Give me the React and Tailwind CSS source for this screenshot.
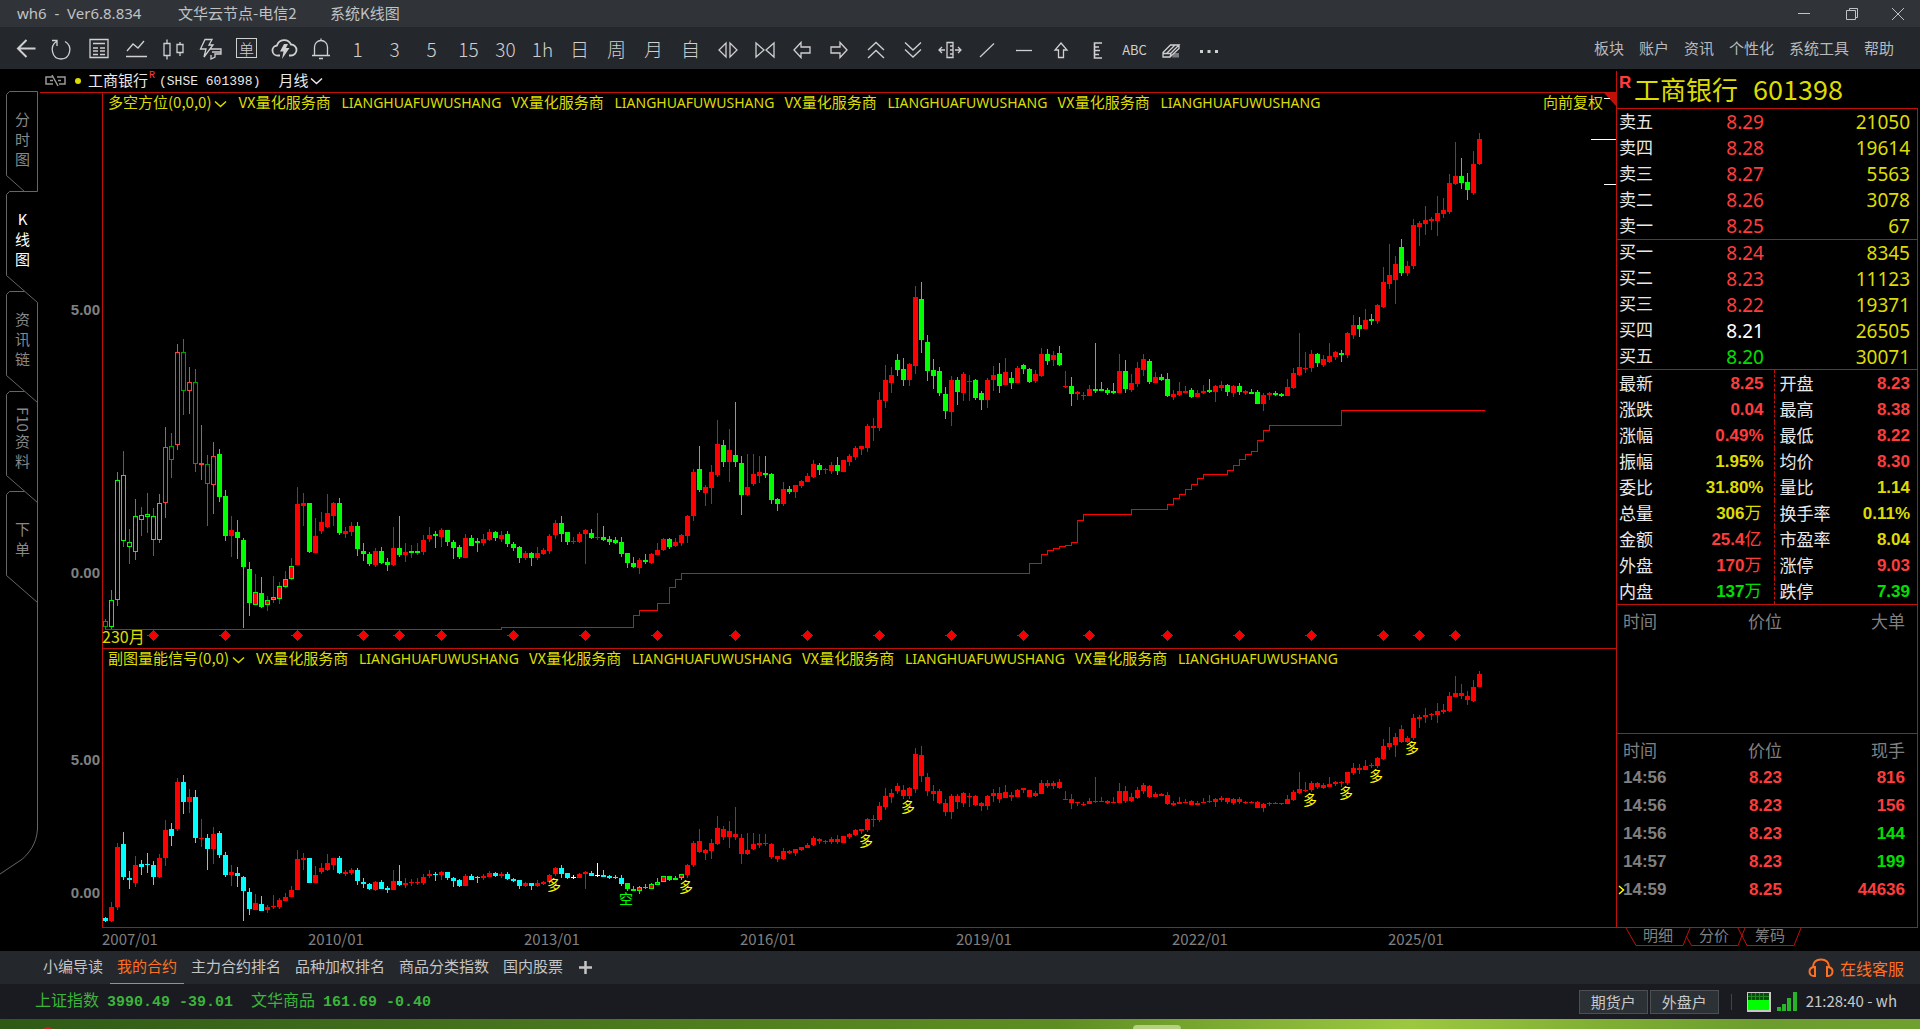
import React, { useState } from "react";
import clsx from "clsx";

// Monthly bars: [high, bodyTop, bodyBottom, low, kind]
// kinds: R/G solid, B red with green frame, M green body on red wick,
// h/g bright hollow, s red hollow, d dark green hollow
const BARS = [
	[619, 621, 627, 629, "d"], [590, 600, 627, 629, "h"], [472, 480, 600, 606, "h"], [451, 475, 541, 547, "g"],
	[529, 542, 547, 564, "g"], [499, 516, 552, 560, "h"], [507, 515, 520, 536, "g"], [493, 514, 517, 533, "g"],
	[508, 516, 540, 556, "g"], [494, 503, 540, 543, "h"], [427, 447, 503, 518, "s"], [433, 446, 460, 478, "d"],
	[344, 352, 445, 450, "s"], [339, 352, 391, 415, "d"], [367, 382, 391, 414, "s"], [369, 382, 464, 472, "d"],
	[425, 463, 465, 480, "s"], [455, 464, 484, 526, "d"], [442, 456, 485, 514, "s"], [449, 454, 497, 502, "G"],
	[490, 496, 536, 541, "G"], [516, 530, 536, 557, "R"], [520, 532, 538, 559, "G"], [538, 540, 567, 628, "G"],
	[562, 569, 603, 616, "G"], [574, 592, 605, 605, "B"], [577, 593, 607, 608, "G"], [596, 600, 605, 611, "B"],
	[576, 597, 600, 603, "B"], [582, 586, 599, 604, "B"], [571, 579, 587, 588, "B"], [558, 566, 579, 580, "B"],
	[487, 504, 565, 565, "R"], [493, 503, 506, 526, "R"], [503, 503, 552, 553, "G"], [518, 536, 553, 553, "R"],
	[512, 522, 531, 534, "R"], [494, 513, 527, 528, "R"], [502, 503, 516, 526, "R"], [498, 503, 533, 535, "G"],
	[527, 531, 534, 538, "R"], [522, 526, 532, 536, "R"], [522, 526, 549, 556, "G"], [543, 551, 554, 561, "G"],
	[552, 554, 564, 566, "G"], [548, 551, 565, 567, "R"], [547, 551, 563, 564, "G"], [558, 562, 565, 571, "G"],
	[527, 548, 565, 566, "R"], [516, 548, 555, 557, "G"], [543, 552, 555, 562, "R"], [545, 551, 553, 558, "M"],
	[543, 551, 553, 555, "M"], [535, 540, 552, 555, "R"], [527, 535, 539, 542, "R"], [531, 534, 536, 548, "G"],
	[528, 530, 537, 547, "R"], [530, 530, 542, 546, "G"], [540, 542, 548, 559, "G"], [545, 547, 557, 559, "G"],
	[534, 538, 558, 558, "R"], [535, 538, 546, 546, "G"], [538, 541, 543, 552, "G"], [534, 539, 543, 546, "R"],
	[529, 532, 540, 541, "R"], [531, 532, 538, 541, "G"], [531, 535, 539, 542, "R"], [531, 534, 544, 547, "G"],
	[542, 544, 548, 551, "G"], [546, 547, 558, 563, "G"], [551, 553, 558, 560, "R"], [552, 553, 558, 566, "G"],
	[547, 553, 558, 560, "R"], [548, 550, 554, 555, "R"], [534, 536, 551, 554, "R"], [520, 523, 535, 539, "R"],
	[516, 523, 534, 542, "G"], [532, 532, 542, 545, "G"], [537, 541, 542, 544, "R"], [532, 534, 542, 543, "R"],
	[529, 530, 534, 564, "R"], [529, 533, 538, 539, "G"], [513, 537, 538, 540, "R"], [526, 537, 540, 541, "G"],
	[536, 539, 542, 545, "G"], [537, 540, 543, 544, "G"], [537, 542, 554, 557, "G"], [553, 553, 563, 568, "G"],
	[557, 563, 567, 568, "G"], [558, 560, 568, 574, "R"], [554, 560, 562, 564, "G"], [553, 554, 563, 564, "R"],
	[543, 550, 555, 555, "R"], [538, 539, 550, 551, "R"], [538, 539, 547, 549, "G"], [538, 542, 546, 547, "R"],
	[534, 535, 543, 546, "R"], [515, 516, 536, 543, "R"], [469, 472, 516, 521, "R"], [446, 469, 490, 492, "G"],
	[485, 487, 493, 506, "R"], [465, 472, 488, 504, "R"], [420, 444, 475, 477, "R"], [440, 445, 462, 467, "G"],
	[429, 450, 462, 482, "R"], [402, 455, 462, 467, "G"], [456, 463, 495, 515, "G"], [454, 487, 495, 496, "R"],
	[454, 474, 484, 486, "R"], [456, 472, 476, 483, "R"], [456, 473, 475, 478, "G"], [473, 474, 500, 504, "G"],
	[498, 499, 504, 511, "G"], [482, 489, 504, 506, "R"], [486, 489, 492, 494, "G"], [485, 485, 492, 498, "R"],
	[480, 481, 486, 488, "R"], [473, 476, 482, 482, "R"], [460, 464, 477, 478, "R"], [463, 465, 470, 475, "G"],
	[468, 469, 470, 474, "R"], [462, 465, 471, 474, "R"], [457, 465, 471, 475, "G"], [460, 460, 472, 472, "R"],
	[454, 456, 462, 466, "R"], [446, 448, 457, 460, "R"], [446, 446, 449, 455, "R"], [424, 426, 448, 452, "R"],
	[418, 426, 428, 441, "R"], [392, 400, 428, 431, "R"], [365, 380, 401, 408, "R"], [367, 375, 383, 393, "R"],
	[354, 360, 370, 376, "G"], [358, 369, 380, 386, "G"], [363, 364, 380, 386, "R"], [286, 297, 366, 374, "R"],
	[282, 299, 340, 353, "G"], [335, 342, 371, 381, "G"], [359, 370, 376, 389, "G"], [367, 371, 393, 396, "G"],
	[387, 394, 411, 419, "G"], [376, 380, 412, 426, "R"], [377, 380, 392, 405, "G"], [372, 374, 393, 401, "R"],
	[375, 381, 382, 401, "R"], [379, 380, 398, 400, "G"], [391, 393, 400, 410, "G"], [378, 380, 400, 408, "R"],
	[366, 375, 380, 391, "R"], [363, 374, 386, 393, "G"], [358, 372, 385, 385, "R"], [372, 378, 383, 389, "G"],
	[366, 368, 383, 383, "R"], [364, 365, 369, 374, "G"], [368, 369, 382, 383, "G"], [370, 374, 381, 383, "R"],
	[348, 354, 376, 377, "R"], [349, 354, 361, 365, "G"], [351, 355, 360, 366, "R"], [346, 353, 365, 366, "G"],
	[371, 386, 387, 388, "R"], [377, 386, 394, 406, "G"], [391, 392, 394, 400, "R"], [392, 395, 396, 400, "R"],
	[385, 389, 396, 396, "R"], [343, 389, 391, 393, "G"], [382, 389, 391, 391, "G"], [388, 390, 393, 395, "G"],
	[383, 391, 393, 394, "G"], [354, 371, 393, 393, "R"], [360, 371, 389, 393, "G"], [374, 383, 390, 392, "R"],
	[362, 368, 384, 387, "R"], [354, 359, 370, 376, "R"], [359, 361, 382, 384, "G"], [372, 377, 383, 383, "R"],
	[374, 377, 380, 381, "G"], [373, 379, 396, 397, "G"], [390, 394, 397, 400, "R"], [382, 391, 395, 396, "R"],
	[386, 391, 393, 393, "R"], [388, 390, 397, 398, "G"], [390, 393, 397, 397, "R"], [385, 391, 393, 394, "R"],
	[379, 390, 392, 393, "G"], [385, 386, 392, 402, "R"], [381, 385, 388, 391, "R"], [384, 385, 392, 396, "G"],
	[385, 386, 393, 397, "R"], [383, 386, 392, 395, "G"], [390, 391, 393, 395, "R"], [389, 392, 394, 394, "G"],
	[390, 392, 404, 404, "G"], [393, 395, 404, 411, "R"], [392, 393, 395, 400, "R"], [391, 393, 395, 396, "G"],
	[393, 394, 396, 397, "G"], [379, 387, 396, 396, "R"], [368, 373, 388, 389, "R"], [333, 367, 375, 376, "R"],
	[352, 368, 369, 373, "R"], [350, 354, 368, 372, "R"], [353, 354, 363, 367, "G"], [355, 359, 365, 367, "R"],
	[343, 356, 362, 363, "R"], [351, 352, 357, 360, "R"], [350, 353, 355, 362, "G"], [332, 333, 355, 358, "R"],
	[315, 325, 335, 339, "R"], [317, 325, 329, 337, "G"], [309, 320, 329, 329, "R"], [314, 319, 321, 325, "G"],
	[304, 305, 321, 324, "R"], [267, 282, 307, 308, "R"], [244, 275, 284, 289, "R"], [256, 264, 280, 304, "R"],
	[239, 247, 273, 276, "G"], [261, 266, 273, 276, "R"], [219, 225, 266, 269, "R"], [221, 223, 227, 246, "R"],
	[206, 220, 224, 235, "R"], [217, 219, 221, 230, "R"], [196, 213, 221, 236, "R"], [198, 210, 214, 218, "R"],
	[174, 183, 212, 214, "R"], [142, 176, 184, 185, "R"], [158, 176, 183, 189, "G"], [173, 182, 190, 200, "G"],
	[151, 164, 193, 195, "R"], [133, 139, 164, 165, "R"]
];

// kind -> [wick, body fill, body frame]
const PAINT = {
	R: ["#ff0000", "#ff0000", null],
	G: ["#00ff00", "#00ff00", null],
	B: ["#ff0000", "#ff0000", "#00ff00"],
	M: ["#ff0000", "#00ff00", null],
	h: ["#ff3c3c", "#000", "#00ff00"],
	g: ["#00a000", "#000", "#00ff00"],
	s: ["#ff3c3c", "#000", "#ff3c3c"],
	d: ["#00a000", "#000", "#00a000"],
	C: ["#00ffff", "#00ffff", null],
	W: ["#ffffff", "#ffffff", null],
	F: ["#00ff00", "#ff0000", "#00ff00"]
};

const STEPS = [
	[105, 629], [501, 627], [633, 615], [639, 610], [657, 603], [669, 587], [675, 579], [681, 573], [1029, 563],
	[1041, 554], [1047, 550], [1053, 548], [1059, 546], [1065, 545], [1071, 542], [1077, 520], [1083, 514],
	[1131, 509], [1167, 504], [1173, 498], [1179, 494], [1185, 489], [1191, 484], [1197, 478], [1203, 474],
	[1227, 470], [1233, 465], [1239, 459], [1245, 454], [1251, 451], [1257, 440], [1263, 430], [1269, 425], [1341, 410]
];

const DIAMONDS = [153, 225, 297, 363, 399, 441, 513, 585, 657, 735, 807, 879, 951, 1023, 1089, 1167, 1239, 1311, 1383, 1419, 1455];

const SIGNALS = [
	[554, 885, "多"], [626, 899, "空"], [686, 887, "多"], [866, 841, "多"], [908, 807, "多"],
	[1310, 800, "多"], [1346, 793, "多"], [1376, 776, "多"], [1412, 748, "多"]
];

const ASKS = [["卖五", "8.29", "21050"], ["卖四", "8.28", "19614"], ["卖三", "8.27", "5563"], ["卖二", "8.26", "3078"], ["卖一", "8.25", "67"]];
const BIDS = [["买一", "8.24", "8345"], ["买二", "8.23", "11123"], ["买三", "8.22", "19371"], ["买四", "8.21", "26505"], ["买五", "8.20", "30071"]];

const RED = "text-[#ff3c3c]";
const GREEN = "text-[#00e000]";
const YELLOW = "text-[#dcdc00]";

const STATS = [
	["最新", "8.25", "", RED, "开盘", "8.23", RED],
	["涨跌", "0.04", "", RED, "最高", "8.38", RED],
	["涨幅", "0.49%", "", RED, "最低", "8.22", RED],
	["振幅", "1.95%", "", YELLOW, "均价", "8.30", RED],
	["委比", "31.80%", "", YELLOW, "量比", "1.14", YELLOW],
	["总量", "306", "万", YELLOW, "换手率", "0.11%", YELLOW],
	["金额", "25.4", "亿", RED, "市盈率", "8.04", YELLOW],
	["外盘", "170", "万", RED, "涨停", "9.03", RED],
	["内盘", "137", "万", GREEN, "跌停", "7.39", GREEN]
];

const TRADES = [
	["14:56", "8.23", "816", RED],
	["14:56", "8.23", "156", RED],
	["14:56", "8.23", "144", GREEN],
	["14:57", "8.23", "199", GREEN],
	["14:59", "8.25", "44636", RED]
];

const barX = (i) => 105 + i * 6;
const subY = (y) => Math.round(603.67 + y * 0.506);

function subKind(kind, i) {
	const up = "RBMhs".includes(kind);
	if (i === 78 || i === 82) return "W";
	if (i >= 97) return "R";
	if (i >= 87) return up && i !== 95 ? "F" : "G";
	return up ? "R" : "C";
}

function Bar({ x, bar, kind }) {
	const [hi, top, bottom, lo] = bar;
	const [wick, fill, frame] = PAINT[kind];
	const h = Math.max(bottom - top, 1);
	return (
		<g>
			<rect x={x} y={hi} width={1} height={Math.max(lo - hi, 1)} fill={wick} />
			<rect x={x - 2} y={top} width={5} height={h} fill={frame || fill} />
			{frame && h > 2 && <rect x={x - 1} y={top + 1} width={3} height={h - 2} fill={fill} />}
		</g>
	);
}

function AxisLabel({ y, children }) {
	return (
		<text x={100} y={y} textAnchor="end" className="fill-[#808080] font-['Liberation_Sans'] text-[15px] font-bold">
			{children}
		</text>
	);
}

function stepPath() {
	let d = `M${STEPS[0][0]} ${STEPS[0][1] + 0.5}`;
	STEPS.slice(1).forEach(([x, y]) => {
		d += `H${x + 0.5}V${y + 0.5}`;
	});
	return `${d}H1485`;
}

function Chevron({ className }) {
	return (
		<svg width="13" height="8" viewBox="0 0 13 8" fill="none" stroke="currentColor" strokeWidth="1.5" className={className}>
			<path d="M1 1.5l5.500 5L12 1.500" />
		</svg>
	);
}

function IndicatorTitle({ name }) {
	return (
		<div className="absolute left-[68px] top-0 flex h-[18px] items-center whitespace-nowrap text-[15px] text-[#dcdc00]">
			<button type="button" className="flex items-center gap-[3px]">
				{name}
				<Chevron className="mt-1" />
			</button>
			<div className="ml-[11px] flex">
				{[0, 1, 2, 3].map((n) => (
					<span key={n} className="flex w-[273px] items-baseline">
						<span className="w-[103px]">VX量化服务商</span>
						<span className="font-['Noto_Sans'] text-[14px] leading-none">LIANGHUAFUWUSHANG</span>
					</span>
				))}
			</div>
		</div>
	);
}

function Glyph({ children, w = 28 }) {
	return (
		<svg width={w} height="28" viewBox={`0 0 ${w} 28`} fill="none" stroke="currentColor" strokeWidth="1.300">
			{children}
		</svg>
	);
}

const TOOLS = [
	["后退", <Glyph><path strokeWidth="2" d="M24.500 14.500H7M15.500 6 7 14.500l8.500 8.500" /></Glyph>],
	["刷新", <Glyph><path d="M4 6.500h5V12M8.500 7.500C1.500 12 3.500 25 13 25s12-13 4-17.500" /></Glyph>],
	["报价", <Glyph><path d="M5 5.500h18v18H5zM8 9.500h12M8 14h5m2 0h5M8 17h5m2 0h5M8 20.500h5m2 0h5" /></Glyph>],
	["分时", <Glyph><path d="M5 17l6-7 5 4 6-7M4 22.500h21" /></Glyph>],
	["K线", <Glyph><path d="M5 9.500h6v12H5zM8 5.500v4m0 12v4M18 10.500h6v8h-6zM21 8v2.500m0 8V22" /></Glyph>],
	["闪电下单", <Glyph><path d="M9 5.500h7L13 11h4L8 23l2-8H4.500zM14 15h11v5h-6v3l-4 2v-4M16 18h9" /></Glyph>],
	["下单", (
		<span className="flex h-5 w-[21px] items-center justify-center border border-current text-[15px] leading-none">单</span>
	)],
	["云", (
		<Glyph>
			<path strokeWidth="1.800" d="M10 21.500H8a5 5 0 0 1-1-10 7.500 7.500 0 0 1 14-1 5.500 5.500 0 0 1 0 11h-2" />
			<path fill="currentColor" stroke="none" d="M14 10h4l-2 4h3.500L12 25l1.500-7.500H10z" />
		</Glyph>
	)],
	["预警", <Glyph><path d="M5 21.500h18M7.500 21V13a6.500 6.500 0 0 1 13 0v8M14 4.500v2M12 24.500h4" /></Glyph>],
	["1分钟", "1"], ["3分钟", "3"], ["5分钟", "5"], ["15分钟", "15"], ["30分钟", "30"], ["1小时", "1h"],
	["日线", "日"], ["周线", "周"], ["月线", "月"], ["自定义", "自"],
	["放大", <Glyph><path d="M12 9v14l-7-7zM16 9v14l7-7z" /></Glyph>],
	["缩小", <Glyph><path d="M5 9v14l8-7zM23 9v14l-8-7z" /></Glyph>],
	["左移", <Glyph><path d="M6 16 13 8.500v4.500h9v6h-9v4.500z" /></Glyph>],
	["右移", <Glyph><path d="M22 16 15 8.500v4.500H6v6h9v4.500z" /></Glyph>],
	["上翻", <Glyph><path d="M6 16l8-7.500 8 7.500M6 24l8-7.500 8 7.500" /></Glyph>],
	["下翻", <Glyph><path d="M6 8.500l8 7.500 8-7.500M6 15.500l8 7.500 8-7.500" /></Glyph>],
	["间距", <Glyph><path d="M11 8.500h6v15h-6zM14 12h3m-3 4h3m-3 4h3M9 16H3m3-3-3 3 3 3M19 16h6m-3-3 3 3-3 3" /></Glyph>],
	["画线", <Glyph><path strokeWidth="1.200" d="M7 23 21 9.500" /></Glyph>],
	["水平线", <Glyph><path d="M6 16.500h16" /></Glyph>],
	["箭头", <Glyph><path d="M14 9l6 7h-3.500v7.500h-5V16H8z" /></Glyph>],
	["刻度", <Glyph><path strokeWidth="1.600" d="M18 9h-7.500v15H18M11 13h4M11 16.500h5M11 20.500h4" /></Glyph>],
	["文字", <span className="pt-1 text-[13px] font-normal">ABC</span>],
	["擦除", (
		<Glyph>
			<path d="M5 18.500 12.500 11H21l-8.500 8.500H5zM5 18.500V23h7l1-3.500M12 23l9-8.500V11M9 19l8-8" />
			<path fill="currentColor" stroke="none" opacity=".5" d="M16 19h5v4.500h-7z" />
		</Glyph>
	)],
	["更多", <Glyph><path fill="currentColor" stroke="none" d="M5 16h3v3H5zM12.500 16h3v3h-3zM20 16h3v3h-3z" /></Glyph>]
];

function TitleBar() {
	return (
		<header className="flex h-[27px] items-center bg-[#303338] pl-[17px] text-[15px] text-[#c0c2c4]">
			<span className="w-[161px] whitespace-pre font-['Noto_Sans']">wh6  -  Ver6.8.834</span>
			<span className="w-[152px]">文华云节点-电信2</span>
			<span>系统K线图</span>
			<div className="ml-auto flex">
				<button type="button" aria-label="最小化" className="flex h-[27px] w-12 items-center justify-center">
					<svg width="14" height="14" stroke="currentColor"><path d="M1 6.500h12" /></svg>
				</button>
				<button type="button" aria-label="还原" className="flex h-[27px] w-12 items-center justify-center">
					<svg width="14" height="14" fill="none" stroke="currentColor"><path d="M1.500 3.500h9v9h-9zM4.500 3V1.500h8v9H11" /></svg>
				</button>
				<button type="button" aria-label="关闭" className="flex h-[27px] w-11 items-center justify-center">
					<svg width="14" height="14" stroke="currentColor"><path d="M1 1l12 12M13 1 1 13" /></svg>
				</button>
			</div>
		</header>
	);
}

function Toolbar() {
	return (
		<nav className="flex h-[42px] items-center bg-[#24272c] pl-[6px] pr-[26px] text-[#d0d0d0]">
			{TOOLS.map(([label, icon]) => (
				<button
					key={label}
					type="button"
					title={label}
					className="flex h-9 w-[37px] shrink-0 items-center justify-center text-[19px] font-light"
				>
					{typeof icon === "string" ? <span className="pt-[2px]">{icon}</span> : icon}
				</button>
			))}
			<div className="ml-auto flex gap-[15px] whitespace-nowrap text-[15px] text-[#b8babc]">
				{["板块", "账户", "资讯", "个性化", "系统工具", "帮助"].map((m) => (
					<button key={m} type="button">{m}</button>
				))}
			</div>
		</nav>
	);
}

function SideTabs({ active, onSelect }) {
	const tabs = [["分", "时", "图"], ["K", "线", "图"], ["资", "讯", "链"], ["F10", "资", "料"], ["下", "单"]];
	return (
		<div className="relative w-10 shrink-0">
			<svg className="absolute inset-0 h-full w-full" fill="none" stroke="#666">
				<path d="M24.500 122.500 6.500 106.500V25.500l3-3h28v100" />
				<path d="M37.500 122.500h-28l-3 3v81l31 27" />
				<path d="M24.500 222.500h-15l-3 3v81l31 27" />
				<path d="M24.500 322.500h-15l-3 3v81l31 27" />
				<path d="M24.500 422.500h-15l-3 3v81l31 27" />
				<path d="M37.500 233.500V760c-1 16-9 24-15 30L0 805" />
			</svg>
			<div className="relative flex flex-col pl-[7px] pt-5">
				{tabs.map((chars) => (
					<button
						key={chars.join("")}
						type="button"
						onClick={() => onSelect(chars.join(""))}
						className={clsx(
							"flex h-[100px] w-[31px] flex-col items-center justify-center text-[15px] leading-5",
							chars.join("") === active ? "text-white" : "text-[#888]"
						)}
					>
						{chars.map((c) => (
							<span key={c} className={c === "F10" ? "[writing-mode:vertical-rl]" : ""}>{c}</span>
						))}
					</button>
				))}
			</div>
		</div>
	);
}

function MainChart() {
	return (
		<div className="relative h-[556px] border-t border-[#c01008]">
			<svg className="block h-full w-full" shapeRendering="crispEdges">
				<g transform="translate(-40 -93)">
					<AxisLabel y={315}>5.00</AxisLabel>
					<AxisLabel y={578}>0.00</AxisLabel>
					<rect x={102} y={93} width={1} height={556} fill="#c01008" />
					<path d={stepPath()} fill="none" stroke="#ff0000" />
					{BARS.map((b, i) => (
						<Bar key={i} x={barX(i)} bar={b} kind={b[4]} />
					))}
					{DIAMONDS.map((x) => (
						<path key={x} d={`M${x + 0.5} 630l6 5.500-6 5.500-6-5.500z`} fill="#f00000" />
					))}
					<text x={102} y={643} className="fill-[#dcdc00] text-[16px]">230月</text>
				</g>
			</svg>
			<IndicatorTitle name="多空方位(0,0,0)" />
			<button type="button" className="absolute right-[13px] top-0 h-[18px] text-[15px] leading-[18px] text-[#dcdc00]">
				向前复权
			</button>
			<svg width="25" height="100" className="absolute right-0 top-0">
				<path d="M13 0h12v13z" fill="#c01008" />
				<path d="M13 5.500h6M0 46.500h25M13 91.500h12" stroke="#fff" />
			</svg>
		</div>
	);
}

function SubChart() {
	return (
		<div className="relative h-[280px] border-y border-[#c01008]">
			<svg className="block h-full w-full" shapeRendering="crispEdges">
				<g transform="translate(-40 -649)">
					<AxisLabel y={765}>5.00</AxisLabel>
					<AxisLabel y={898}>0.00</AxisLabel>
					<rect x={102} y={649} width={1} height={278} fill="#c01008" />
					{BARS.map((b, i) => (
						<Bar key={i} x={barX(i)} bar={b.slice(0, 4).map(subY)} kind={subKind(b[4], i)} />
					))}
					{SIGNALS.map(([x, y, t]) => (
						<text key={x} x={x} y={y + 5} textAnchor="middle" className={clsx("text-[14px]", t === "多" ? "fill-[#ffff00]" : "fill-[#00ff00]")}>
							{t}
						</text>
					))}
				</g>
			</svg>
			{/* the frame lines only run along the plot, not along the axis gutter */}
			<span className="absolute -top-px left-0 h-px w-[62px] bg-black" />
			<span className="absolute -bottom-px left-0 h-px w-[62px] bg-black" />
			<IndicatorTitle name="副图量能信号(0,0)" />
		</div>
	);
}

function Charts() {
	return (
		<section className="min-w-0 flex-1 overflow-hidden">
			<div className="flex h-[23px] items-center pl-[5px] text-[15px] text-[#e8e8e8]">
				<svg width="21" height="13" fill="none" stroke="#999" strokeWidth="1.500">
					<path d="M8 3H1v7h7M5 6.500h3M7 1l6 11M12 3h8v7h-6M13 6.500h3" />
				</svg>
				<span className="ml-[9px] h-[6px] w-[6px] rounded-full bg-[#dcdc00]" />
				<span className="ml-[7px]">工商银行</span>
				<sup className="w-[11px] pl-px font-['Liberation_Mono'] text-[10px] text-[#ff3c3c]">R</sup>
				<span className="pt-[2px] font-['Liberation_Mono'] text-[13px]">(SHSE 601398)</span>
				<button type="button" className="ml-[18px] flex items-center gap-[2px]">
					月线
					<Chevron />
				</button>
			</div>
			<MainChart />
			<SubChart />
			<div className="flex h-[23px] items-center pl-[62px] text-[15px] text-[#808080]">
				<span className="w-[206px]">2007/01</span>
				{["2010/01", "2013/01", "2016/01", "2019/01", "2022/01", "2025/01"].map((d) => (
					<span key={d} className="w-[216px]">{d}</span>
				))}
			</div>
		</section>
	);
}

function priceColor(p) {
	if (p === "8.21") return "text-white";
	return p === "8.20" ? GREEN : RED;
}

function Depth({ rows }) {
	return (
		<table className="w-full table-fixed border-t border-[#c01008] font-['Noto_Sans','Noto_Sans_CJK_SC',sans-serif] text-[19px] leading-6">
			<tbody>
				{rows.map(([label, price, vol]) => (
					<tr key={label} className="h-[26px]">
						<th className="w-[60px] p-0 pl-[2px] text-left text-[17px] font-normal text-[#e8e8e8]">{label}</th>
						<td className={clsx("w-[87px] p-0 pt-px text-right", priceColor(price))}>{price}</td>
						<td className="p-0 pr-[7px] pt-px text-right text-[#dcdc00]">{vol}</td>
					</tr>
				))}
			</tbody>
		</table>
	);
}

function Stats() {
	const num = "pt-[2px] text-right font-['Liberation_Sans'] font-bold";
	return (
		<table className="w-full table-fixed border-t border-[#c01008] text-[17px] leading-6 text-[#e8e8e8]">
			<tbody>
				{STATS.map(([l1, v1, unit, c1, l2, v2, c2]) => (
					<tr key={l1} className="h-[26px]">
						<th className="w-[60px] p-0 pl-[2px] text-left font-normal">{l1}</th>
						<td className={clsx("w-[97px] border-r border-dashed border-[#c01008] pr-[10px]", num, c1)}>
							{v1}
							{unit && <span className="pr-[2px] font-['Noto_Sans_CJK_SC'] font-normal leading-none">{unit}</span>}
						</td>
						<th className="w-[70px] p-0 pl-[5px] text-left font-normal">{l2}</th>
						<td className={clsx("pr-[7px]", num, c2)}>{v2}</td>
					</tr>
				))}
			</tbody>
		</table>
	);
}

function TickTable({ last, rows, className }) {
	return (
		<div className={clsx("border-t border-[#c01008] pt-[2px]", className)}>
			<table className="w-full table-fixed text-[17px] leading-7">
				<thead>
					<tr className="h-7 text-[#808080]">
						<th className="w-[65px] p-0 pl-[6px] text-left font-normal">时间</th>
						<th className="w-[100px] p-0 text-right font-normal">价位</th>
						<th className="p-0 pr-[12px] text-right font-normal">{last}</th>
					</tr>
				</thead>
				<tbody className="font-['Liberation_Sans'] font-bold">
					{rows.map(([time, price, vol, color], i) => (
						<tr key={i} className="h-7">
							<td className="relative p-0 pl-[6px] text-[#808080]">
								{i === rows.length - 1 && (
									<svg width="7" height="10" fill="none" stroke="#ffff00" strokeWidth="1.500" className="absolute left-px top-[9px]">
										<path d="M1 1l4.500 4L1 9" />
									</svg>
								)}
								{time}
							</td>
							<td className="p-0 text-right text-[#ff3c3c]">{price}</td>
							<td className={clsx("p-0 pr-[12px] text-right", color)}>{vol}</td>
						</tr>
					))}
				</tbody>
			</table>
		</div>
	);
}

function QuotePanel() {
	return (
		<aside className="flex w-[304px] shrink-0 flex-col pr-[2px] pt-[2px]">
			<div className="flex h-[37px] border-l border-[#c01008] pl-[2px] text-[#dcdc00]">
				<span className="w-[15px] pt-[2px] font-['Liberation_Sans'] text-[17px] font-bold leading-5 text-[#ff3c3c]">R</span>
				<h1 className="flex gap-[15px] whitespace-nowrap text-[26px] leading-[35px]">
					<span>工商银行</span>
					<span className="text-[27px]">601398</span>
				</h1>
			</div>
			<div className="flex flex-1 flex-col border-x border-b border-[#c01008]">
				<Depth rows={ASKS} />
				<Depth rows={BIDS} />
				<Stats />
				<TickTable last="大单" rows={[]} className="h-[129px]" />
				<TickTable last="现手" rows={TRADES} className="flex-1" />
			</div>
			<div className="relative h-[23px]">
				<svg width="200" height="19" className="absolute left-0 top-0" fill="none" stroke="#c01008">
					<path d="M10 0l10 17.500h47L74 0M70 8l5.500 9.500H122L129 0M122 0l9 17.500h47L185 0" />
				</svg>
				<div className="relative flex gap-[26px] pl-[27px] text-[15px] leading-[14px] text-[#808080]">
					<button type="button">明细</button>
					<button type="button">分价</button>
					<button type="button">筹码</button>
				</div>
			</div>
		</aside>
	);
}

function PageTabs({ active, onSelect }) {
	const pages = ["小编导读", "我的合约", "主力合约排名", "品种加权排名", "商品分类指数", "国内股票"];
	return (
		<nav className="flex h-[33px] items-stretch bg-[#24282d] pl-9 pr-4 text-[15px] text-[#c4c4c4]">
			{pages.map((p) => (
				<button
					key={p}
					type="button"
					onClick={() => onSelect(p)}
					className={clsx(
						"whitespace-nowrap border-b px-[7px] pb-[2px]",
						p === active ? "border-[#ff7020] text-[#ff7020]" : "border-transparent"
					)}
				>
					{p}
				</button>
			))}
			<button type="button" aria-label="添加" className="px-[9px]">
				<svg width="13" height="13" stroke="currentColor" strokeWidth="2.500"><path d="M0 6.500h13M6.500 0v13" /></svg>
			</button>
			<a href="#service" className="ml-auto flex items-center gap-[6px] text-[16px] text-[#ff7020]">
				<svg width="26" height="20" viewBox="0 0 26 20" fill="none" stroke="currentColor" strokeWidth="2">
					<path d="M5 9C5 4.500 8 1.500 13 1.500S21 4.500 21 9" />
					<path d="M7 9v9C3 18.500 1.500 16 1.500 13.500S3.500 9 7 9zM19 9v9c4 .5 5.500-2 5.500-4.500S22.500 9 19 9z" />
				</svg>
				在线客服
			</a>
		</nav>
	);
}

function StatusBar() {
	return (
		<footer className="flex h-[35px] items-center bg-[#1a1b20] pl-[35px] pr-[23px] text-[16px] text-[#3cb43c]">
			<div className="flex items-baseline pb-[2px] leading-5">
				<span>上证指数</span>
				<span className="ml-2 whitespace-pre font-['Liberation_Mono'] text-[15px] font-bold">3990.49 -39.01</span>
				<span className="ml-[18px]">文华商品</span>
				<span className="ml-2 whitespace-pre font-['Liberation_Mono'] text-[15px] font-bold">161.69 -0.40</span>
			</div>
			<div className="ml-auto flex items-center text-[15px] text-[#c8c8c8]">
				<button type="button" className="h-6 w-[69px] border border-[#4c4f52] bg-[#2c3136] leading-[21px]">期货户</button>
				<button type="button" className="ml-[2px] h-6 w-[69px] border border-[#4c4f52] bg-[#2c3136] leading-[21px]">外盘户</button>
				<span className="ml-3 h-4 w-px bg-[#c01008]" />
				<svg width="24" height="20" className="ml-[15px]">
					<rect width="24" height="20" fill="#c8c8c8" />
					<rect x="1" y="1" width="21" height="17" fill="#0a4a0a" />
					<path d="M4.500 1v8M8.500 1v8M12.500 1v8M16.500 1v8M1 4.500h21" stroke="#1f8a1f" />
					<rect x="1" y="8" width="21" height="10" fill="#00ff00" />
				</svg>
				<svg width="21" height="19" className="ml-[6px]" fill="#28b428">
					<path d="M0 15h4v4H0zM5 12h4v7H5zM10 6h4v13h-4zM16 0h4v19h-4z" />
				</svg>
				<time className="ml-[8px] whitespace-pre">21:28:40 - wh</time>
			</div>
		</footer>
	);
}

export default function App() {
	const [view, setView] = useState("K线图");
	const [page, setPage] = useState("我的合约");

	return (
		<div className="flex min-h-screen flex-col overflow-hidden bg-black font-['Noto_Sans_CJK_SC',sans-serif]">
			<TitleBar />
			<Toolbar />
			<main className="flex">
				<SideTabs active={view} onSelect={setView} />
				<Charts />
				<QuotePanel />
			</main>
			<PageTabs active={page} onSelect={setPage} />
			<StatusBar />
			{/* Desktop wallpaper under the window */}
			<div className="relative min-h-[10px] flex-1 overflow-hidden bg-linear-to-r from-[#2f5a16] via-[#5b8a22] to-[#6fa030]">
				<div className="absolute inset-y-0 left-[55%] right-[8%] bg-linear-to-r from-transparent via-[#9cc840] to-transparent" />
				<span className="absolute left-[42px] top-2 h-3 w-3 rounded-full bg-[#d02020]" />
				<span className="absolute left-[59%] top-[6px] h-3 w-12 rounded bg-[#b4d080]" />
			</div>
		</div>
	);
}
